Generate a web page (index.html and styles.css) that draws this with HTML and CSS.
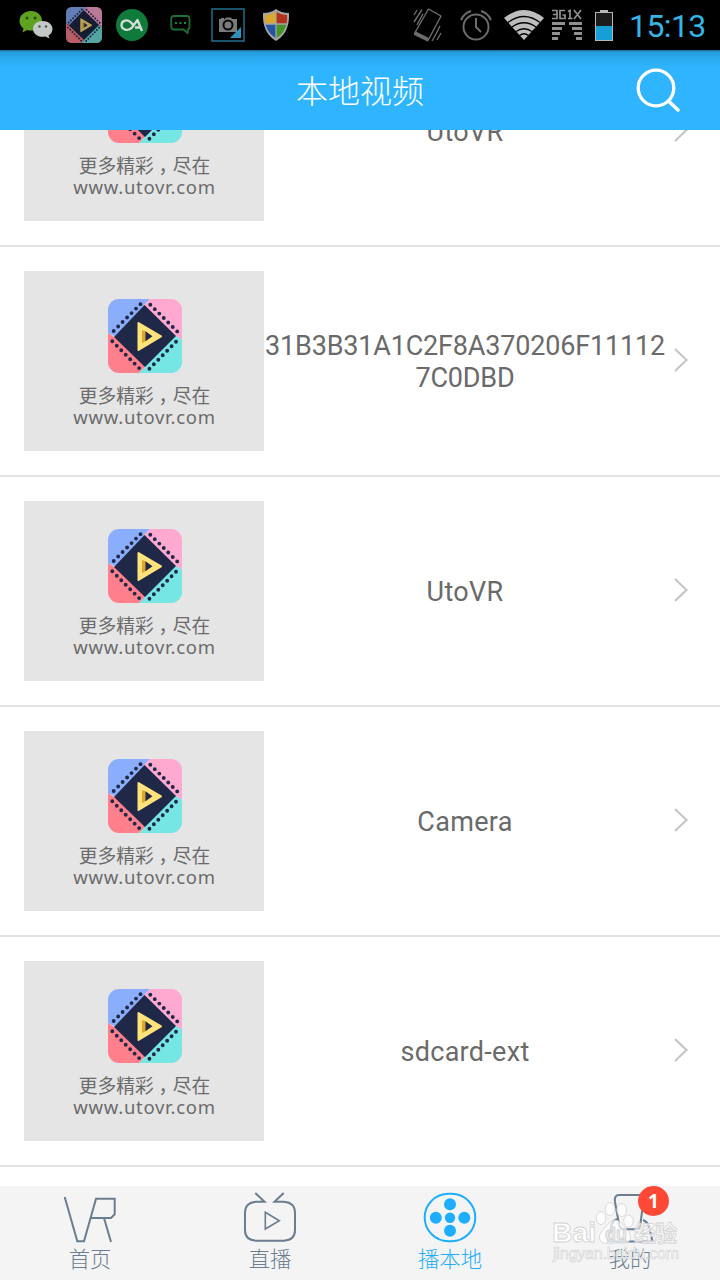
FILE: index.html
```
<!DOCTYPE html>
<html lang="zh-CN">
<head>
  <meta charset="UTF-8">
  <title>本地视频</title>
  <link rel="stylesheet" href="styles.css">
</head>
<body>
  <svg class="defs" width="0" height="0">
    <defs>
      <clipPath id="round"><rect width="74" height="74" rx="11"/></clipPath>
      <symbol id="logo" viewBox="0 0 74 74">
        <g clip-path="url(#round)">
          <path fill="#8aaefb" d="M0 0H42L36 6V37H6L0 34Z"/>
          <path fill="#ffa9d0" d="M42 0H74V41L68 37H36V6Z"/>
          <path fill="#ff808c" d="M0 34L6 38L37 37V68L31 74H0Z"/>
          <path fill="#75e6e4" d="M74 41V74H31L37 68V37H68Z"/>
          <path fill="#1f2947" d="M36.5 6L68 37L37 68L6 38Z"/>
          <g stroke="#1f2947" stroke-width="3.9" stroke-linecap="round" stroke-dasharray="0 6.32">
            <path d="M5.7 32L32.6 5"/>
            <path d="M42.3 5.7L69.8 33"/>
            <path d="M4.3 42.3L31.8 69.8"/>
            <path d="M68 42.7L41.2 70"/>
          </g>
          <path fill="#ffe27a" stroke="#ffe27a" stroke-width="2" stroke-linejoin="round" d="M30.5 24L53 37.3L30.5 51Z"/>
          <path fill="#e0a52c" d="M34 31L38 32.5V42L34 44Z"/>
          <path fill="#1f2947" d="M37.5 32.3L44.5 37.3L37.5 42.3Z"/>
        </g>
      </symbol>
      <symbol id="arrow" viewBox="0 0 16 26">
        <path fill="none" stroke="#c6c6c6" stroke-width="2.2" d="M2 1L13.500 12L2 23"/>
      </symbol>
    </defs>
  </svg>

  <div class="status">
    <svg class="wechat" width="34" height="30" viewBox="0 0 34 30">
      <path fill="#5da321" d="M12 1C5.500 1 .5 5.400 .5 11C.5 14 2 16.700 4.500 18.500L3.500 22.500L8 20C16 22.500 23 17 23 11C23 5.400 18.500 1 12 1Z"/>
      <path fill="#c3c7c7" d="M23.500 11C18 11 14 14.500 14 19C14 24 19.500 28 26.500 26.500L30.500 28.500L29.500 25.500C32 24 33.500 21.500 33.500 19C33.500 14.500 29 11 23.500 11Z"/>
      <g fill="#274b10"><circle cx="8" cy="8" r="1.500"/><circle cx="16" cy="8" r="1.500"/></g>
      <g fill="#555"><circle cx="20.500" cy="16.500" r="1.200"/><circle cx="27" cy="16.500" r="1.200"/></g>
    </svg>
    <svg class="app" width="36" height="36"><use href="#logo"/></svg>
    <svg class="ca" width="32" height="32" viewBox="0 0 32 32">
      <circle cx="16" cy="16" r="16" fill="#0f7b3b"/>
      <path fill="none" stroke="#d5ddd8" stroke-width="2.300" stroke-linejoin="round" d="M19 18.500H24M26 22L21.500 11L16 18.500C12 23 5.500 20.500 5.500 16C5.500 11.500 11.500 9.500 15 13.500L18 17"/>
    </svg>
    <svg class="msg" width="21" height="20" viewBox="0 0 21 20">
      <path fill="none" stroke="#1c6f33" stroke-width="1.800" d="M4 1H17Q19.500 1 19.500 4V11Q19.500 14 18 14.500L17.500 18L13.500 14.500H4Q1.200 14.500 1.200 11V4Q1.200 1 4 1Z"/>
      <g fill="#1c8a3b"><rect x="5" y="7" width="2" height="2"/><rect x="9.500" y="7" width="2" height="2"/><rect x="14" y="7" width="2" height="2"/></g>
    </svg>
    <svg class="camera" width="34" height="34" viewBox="0 0 34 34">
      <rect x="1" y="1" width="32" height="32" fill="none" stroke="#1f6f8d" stroke-width="1.500"/>
      <path fill="#7b7b7b" d="M8 11H10V10H13V11H14L15 9.500H20L21 11H26V24H8Z"/>
      <circle cx="17" cy="17" r="4.500" fill="#7b7b7b" stroke="#080808" stroke-width="2"/>
      <path fill="#2e93bb" d="M30 19V30H19Z"/>
    </svg>
    <svg class="shield" width="26" height="32" viewBox="0 0 26 32">
      <clipPath id="guard"><path d="M13 2.500Q18 6 24 6Q25 22 13 29.500Q1 22 2 6Q8 6 13 2.500Z"/></clipPath>
      <path fill="#a5a5a5" d="M13 0Q18 4 26 4Q27 24 13 32Q-1 24 0 4Q8 4 13 0Z"/>
      <g clip-path="url(#guard)">
        <path fill="#d8a92c" d="M0 0H13V15H0Z"/><path fill="#b2301c" d="M13 0H26V15H13Z"/>
        <path fill="#2456a5" d="M0 15H13V32H0Z"/><path fill="#479326" d="M13 15H26V32H13Z"/>
        <path stroke="#a5a5a5" stroke-width="1.300" d="M13 0V32M0 15H26"/>
      </g>
    </svg>

    <svg class="vibrate" width="30" height="34" viewBox="0 0 30 34">
      <g fill="none" stroke="#6c6c6c" stroke-width="1.400">
        <path stroke-linejoin="round" d="M15.500 1L28 8L15 32.500L1.500 25.500Z"/>
        <path d="M1 7L4 2M1 14L9 1.500M4 17L10 6M19 33L23 26M24 32L28 25M22 28L27 18"/>
      </g>
      <path fill="#6c6c6c" d="M2 23L16 30L14.500 33.500L1 27Z"/>
    </svg>
    <svg class="alarm" width="32" height="32" viewBox="0 0 32 32">
      <g fill="none" stroke="#6c6c6c" stroke-width="2">
        <circle cx="16" cy="18" r="12.500"/>
        <path d="M16 9V18L21 23M1 11Q4 4 11 2M31 11Q28 4 21 2"/>
      </g>
    </svg>
    <svg class="wifi" width="40" height="32" viewBox="0 0 40 32">
      <path fill="#bdbdbd" d="M20 31L0 9Q20 -7 40 9Z"/>
      <path fill="none" stroke="#000" stroke-width="1.300" d="M4 13.500Q20 1.500 36 13.500M8 18Q20 9.500 32 18M12 22.500Q20 17 28 22.500M15.500 26.500Q20 23 24.500 26.500"/>
    </svg>
    <svg class="signal" width="32" height="32" viewBox="0 0 32 32">
      <g fill="none" stroke="#909090" stroke-width="1.700">
        <path d="M1 1.500H6V9.500H1M2 5.500H6M14 1.500H9V9.500H14V6H11.500M17 2.500L19 1.500V9.500M17 9.500H21.500M23 1L30 10M30 1L23 10"/>
      </g>
      <g fill="#909090"><path d="M1 13H14V16H1ZM1 18H11V21H1ZM1 23H9V26H1ZM1 28H7V31H1ZM18 13H31V16H18ZM21 18H31V21H21ZM23 23H31V26H23ZM25 28H31V31H25Z"/></g>
    </svg>
    <svg class="battery" width="18" height="31" viewBox="0 0 18 31">
      <path fill="#b8b8b8" d="M5 0H13V2H18V31H0V2H5Z"/>
      <rect x="1" y="3" width="16" height="27" fill="#1c1c1c"/>
      <rect x="1" y="16" width="16" height="14" fill="#169fd6"/>
    </svg>
    <span class="time">15:13</span>
  </div>

  <header>
    <h1>本地视频</h1>
    <svg class="search" width="48" height="48" viewBox="0 0 48 48">
      <circle cx="22" cy="22" r="17.800" fill="none" stroke="#fff" stroke-width="3.300"/>
      <path stroke="#fff" stroke-width="3.600" stroke-linecap="round" d="M36 36.500L44 44"/>
    </svg>
  </header>

  <div class="list">
    <div class="row">
      <div class="thumb"><svg width="74" height="74"><use href="#logo"/></svg><p>更多精彩<i>，</i>尽在</p><p class="site">www.utovr.com</p></div>
      <div class="name">UtoVR</div>
      <svg class="arrow" width="16" height="26"><use href="#arrow"/></svg>
    </div>
    <div class="row">
      <div class="thumb"><svg width="74" height="74"><use href="#logo"/></svg><p>更多精彩<i>，</i>尽在</p><p class="site">www.utovr.com</p></div>
      <div class="name long">31B3B31A1C2F8A370206F11112<br>7C0DBD</div>
      <svg class="arrow" width="16" height="26"><use href="#arrow"/></svg>
    </div>
    <div class="row">
      <div class="thumb"><svg width="74" height="74"><use href="#logo"/></svg><p>更多精彩<i>，</i>尽在</p><p class="site">www.utovr.com</p></div>
      <div class="name">UtoVR</div>
      <svg class="arrow" width="16" height="26"><use href="#arrow"/></svg>
    </div>
    <div class="row">
      <div class="thumb"><svg width="74" height="74"><use href="#logo"/></svg><p>更多精彩<i>，</i>尽在</p><p class="site">www.utovr.com</p></div>
      <div class="name">Camera</div>
      <svg class="arrow" width="16" height="26"><use href="#arrow"/></svg>
    </div>
    <div class="row">
      <div class="thumb"><svg width="74" height="74"><use href="#logo"/></svg><p>更多精彩<i>，</i>尽在</p><p class="site">www.utovr.com</p></div>
      <div class="name">sdcard-ext</div>
      <svg class="arrow" width="16" height="26"><use href="#arrow"/></svg>
    </div>
  </div>

  <nav>
    <div class="tab">
      <svg width="60" height="56" viewBox="0 0 60 56">
        <path d="M4.700 7L17.300 51.300H24L36 8.700H54.700V24.300L51 28H30.700M44 28L51 52"/>
      </svg>
      <span>首页</span>
    </div>
    <div class="tab">
      <svg width="60" height="56" viewBox="0 0 60 56">
        <path d="M15.300 3L24.500 11.700H16Q5 12.500 5 23V40Q5 50 16 50.700H44Q55 50 55 40V23Q55 12.500 44 11.700H34.500L43.700 3"/>
        <path stroke-width="1.600" d="M25.300 22.300L39.300 30.700L25.300 39Z"/>
      </svg>
      <span>直播</span>
    </div>
    <div class="tab active">
      <svg width="60" height="56" viewBox="0 0 60 56">
        <rect x="4.700" y="3.700" width="50.600" height="47.600" rx="23.800"/>
        <g class="dots">
          <circle cx="30" cy="14.300" r="6"/><circle cx="30" cy="40.700" r="6"/>
          <circle cx="15.800" cy="27.800" r="6"/><circle cx="44.300" cy="27.800" r="6"/>
          <circle cx="30" cy="27.800" r="5.200"/>
        </g>
      </svg>
      <span>播本地</span>
    </div>
    <div class="tab">
      <svg width="60" height="56" viewBox="0 0 60 56">
        <path d="M19 5H40Q44 5 43.500 11L40.500 33Q39.500 39.300 35 39.300H24Q20 39.300 19 34L15 12Q14 5 19 5ZM17 29Q12 31 11 37L8 51.500H52.500L49.500 38Q48 32 43 30"/>
      </svg>
      <span>我的</span>
      <b class="badge">1</b>
    </div>
  </nav>

  <svg class="watermark" width="132" height="66" viewBox="0 0 132 66">
    <ellipse cx="50" cy="21" rx="4.800" ry="6.500"/>
    <ellipse cx="59" cy="12" rx="4.800" ry="6.500"/>
    <ellipse cx="70.700" cy="13" rx="4.800" ry="6.500"/>
    <ellipse cx="77.500" cy="24" rx="4.800" ry="6"/>
    <path d="M58 26Q64 20 70 26L78 35Q82 44 75 46Q70 47 66 45.500Q58 48 52 46Q45 42 51 34Z"/>
    <text class="bai" x="1" y="45" font-size="28" textLength="44" lengthAdjust="spacingAndGlyphs">Bai</text>
    <text class="du" x="54" y="43" font-size="18">du</text>
    <text x="83" y="44" font-size="22" textLength="43">经验</text>
    <text class="url" x="2" y="62" font-size="16" textLength="126">jingyan.baidu.com</text>
  </svg>
</body>
</html>
```
FILE: styles.css
```
* {
  box-sizing: border-box;
}

body {
  margin: 0;
  width: 720px;
  height: 1280px;
  overflow: hidden;
  display: flex;
  flex-direction: column;
  background: #fff;
  font-family: Roboto, "Noto Sans CJK SC", sans-serif;
}

svg {
  display: block;
  flex: none;
}

.defs {
  position: absolute;
}

/* status bar */
.status {
  flex: none;
  height: 50px;
  background: #000;
  display: flex;
  align-items: center;
}

.wechat { margin-left: 19px; }
.app { margin-left: 13px; opacity: 0.72; }
.ca { margin-left: 14px; }
.msg { margin-left: 22px; }
.camera { margin-left: 20px; }
.shield { margin-left: 18px; }
.vibrate { margin-left: 124px; }
.alarm { margin-left: 17px; }
.wifi { margin-left: 12px; }
.signal { margin-left: 7px; }
.battery { margin-left: 12px; }

.time {
  margin-left: 16px;
  color: #33b5e5;
  font-size: 32px;
  line-height: 50px;
  letter-spacing: -0.6px;
  padding-top: 2px;
}

/* title bar */
header {
  flex: none;
  height: 80px;
  background: linear-gradient(#1c6a96 0, #259bdc 2px, #2ba9ef 8px, #2fb5ff 18px);
  display: grid;
  grid-template-columns: 86px 1fr 86px;
  align-items: center;
}

h1 {
  grid-column: 2;
  margin: 0;
  text-align: center;
  color: #fff;
  font-size: 32px;
  font-weight: 300;
  line-height: 78px;
  padding-bottom: 2px;
  font-family: "Noto Sans CJK SC", sans-serif;
}

/* video folders */
.list {
  flex: 1;
  min-height: 0;
  overflow: hidden;
  display: flex;
  flex-direction: column;
  justify-content: flex-end;
  padding-bottom: 19px;
}

.row {
  flex: none;
  height: 230px;
  padding: 24px 31px 24px 24px;
  border-bottom: 2px solid #e3e3e3;
  display: flex;
  align-items: center;
}

.thumb {
  width: 240px;
  height: 180px;
  padding: 28px 0 0 1px;
  background: #e5e5e5;
  display: flex;
  flex-direction: column;
  align-items: center;
  color: #6b6b6b;
}

.thumb p {
  margin: 11px 0 0;
  font: 18.800px/22px "Noto Sans CJK SC", sans-serif;
  white-space: nowrap;
}

.thumb i {
  font-style: normal;
  font-feature-settings: "halt";
  margin: 0 4.700px;
}

.thumb .site {
  margin-top: 0;
  font-family: "Noto Sans", sans-serif;
  font-size: 18.500px;
  letter-spacing: 0.7px;
}

.name {
  width: 402px;
  padding-top: 2px;
  text-align: center;
  color: #6a6a6a;
  font-size: 27px;
  line-height: 32px;
  letter-spacing: 0.3px;
  white-space: nowrap;
}

.long {
  letter-spacing: -0.180px;
}

.arrow {
  margin-left: 7px;
}

/* bottom tabs */
nav {
  flex: none;
  height: 94px;
  background: #f4f4f4;
  display: grid;
  grid-template-columns: repeat(4, 1fr);
}

.tab {
  position: relative;
  padding-top: 4px;
  display: flex;
  flex-direction: column;
  align-items: center;
  color: #6b7d8f;
}

.tab svg {
  fill: none;
  stroke: currentColor;
  stroke-width: 2;
}

.tab span {
  font: 300 21.300px/24px "Noto Sans CJK SC", sans-serif;
}

.active {
  color: #1eaeff;
}

.tab .dots {
  fill: currentColor;
  stroke: none;
}

.badge {
  position: absolute;
  left: 98px;
  top: 0;
  width: 31px;
  height: 30px;
  border-radius: 50%;
  background: #ff4836;
  color: #fff;
  text-align: center;
  font: bold 19px/30px "Open Sans", sans-serif;
}

.watermark {
  position: absolute;
  left: 551px;
  top: 1197px;
  font-family: "Liberation Sans", "Noto Sans CJK SC", sans-serif;
  font-weight: bold;
  fill: rgba(255, 255, 255, 0.7);
  stroke: #d2d2d2;
  stroke-width: 0.8;
}

.watermark .bai {
  fill: #fff;
}

.watermark .du {
  fill: #ececec;
}

.watermark .url {
  font-weight: normal;
  stroke-width: 0.6;
}
```
